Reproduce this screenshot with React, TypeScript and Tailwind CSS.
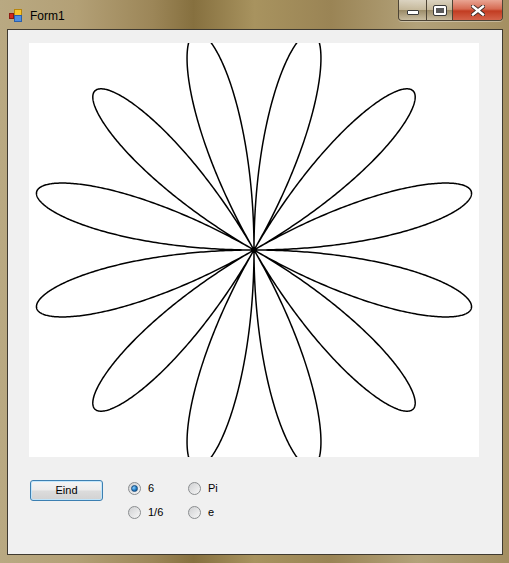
import { useMemo } from 'react';

const FONT = { fontFamily: '"Liberation Sans", Arial, sans-serif' };

// r = R * sin(6t), 12 petals centred on the canvas
function RoseCanvas() {
  const d = useMemo(() => {
    const cx = 225;
    const cy = 207;
    const R = 225;
    const pts: string[] = [];
    const steps = 3000;
    for (let i = 0; i <= steps; i++) {
      const t = (i / steps) * Math.PI * 2;
      const r = R * Math.sin(6 * t);
      const x = cx + r * Math.cos(t);
      const y = cy - r * Math.sin(t);
      pts.push(`${i === 0 ? 'M' : 'L'}${x.toFixed(2)} ${y.toFixed(2)}`);
    }
    return pts.join(' ');
  }, []);

  return (
    <div className="w-[450px] h-[414px] bg-white overflow-hidden">
      <svg width="450" height="414" viewBox="0 0 450 414">
        <path d={d} fill="none" stroke="#000" strokeWidth="1.5" />
      </svg>
    </div>
  );
}

function FormIcon() {
  return (
    <svg width="13" height="13" viewBox="0 0 13 13" className="flex-shrink-0">
      <rect x="0.5" y="4.5" width="4" height="5" fill="#d42a1c" stroke="#8c1a10" strokeWidth="1" />
      <rect x="5.5" y="0.5" width="7" height="6" fill="#f7c52e" stroke="#b8860b" strokeWidth="1" />
      <rect x="5.5" y="6.5" width="7" height="6" fill="#4f8ee0" stroke="#2c5fa8" strokeWidth="1" />
    </svg>
  );
}

function CaptionButtons() {
  return (
    <div className="flex h-[21px] rounded-b-[4px] border border-t-0 border-[#4d4435] overflow-hidden shadow-[0_1px_0_rgba(255,255,255,0.35)]">
      <div className="w-[28px] h-full flex items-center justify-center bg-[linear-gradient(to_bottom,rgba(255,255,255,0.55),rgba(255,255,255,0.25)_50%,rgba(90,80,60,0.25)_51%,rgba(255,255,255,0.3))] border-r border-[#4d4435]">
        <div className="w-[12px] h-[5px] mt-[5px] bg-white border border-[#3a3a3a] rounded-[1px]" />
      </div>
      <div className="w-[26px] h-full flex items-center justify-center bg-[linear-gradient(to_bottom,rgba(255,255,255,0.55),rgba(255,255,255,0.25)_50%,rgba(90,80,60,0.25)_51%,rgba(255,255,255,0.3))] border-r border-[#4d4435]">
        <div className="w-[12px] h-[9px] border-[2.5px] border-white outline outline-1 outline-[#3a3a3a] rounded-[1px] bg-[#5a5a5a]" />
      </div>
      <div className="w-[49px] h-full flex items-center justify-center bg-[linear-gradient(to_bottom,#e9a593,#d66a52_45%,#c23c22_55%,#d4634a)]">
        <svg width="14" height="11" viewBox="0 0 14 11">
          <path d="M2 1.5 L12 9.5 M12 1.5 L2 9.5" stroke="#3a2a26" strokeWidth="4.2" strokeLinecap="square" />
          <path d="M2 1.5 L12 9.5 M12 1.5 L2 9.5" stroke="#fff" strokeWidth="2.4" strokeLinecap="square" />
        </svg>
      </div>
    </div>
  );
}

function Radio({ checked, label }: { checked?: boolean; label: string }) {
  return (
    <div className="flex items-center gap-[7px] h-[16px]">
      <div className="w-[13px] h-[13px] rounded-full border border-[#8a8d8f] bg-[linear-gradient(135deg,#cfd0d2,#f7f7f7)] flex items-center justify-center flex-shrink-0">
        {checked && (
          <div className="w-[7px] h-[7px] rounded-full bg-[radial-gradient(circle_at_35%_35%,#8fd0ff,#1e7bc4_55%,#0b3f74)] border border-[#1b4d7e]" />
        )}
      </div>
      <span className="text-[11px] text-black leading-none">{label}</span>
    </div>
  );
}

export default function App() {
  return (
    <div
      className="w-[509px] h-[563px] flex flex-col pl-[7px] pr-[6px] bg-[linear-gradient(to_right,#b9a982_0%,#b3a076_15%,#9c8658_30%,#86703f_38%,#a8935f_50%,#9a8455_65%,#b3a27a_82%,#a48f62_100%)]"
      style={FONT}
    >
      {/* Title bar */}
      <div className="h-[29px] flex items-start justify-between flex-shrink-0">
        <div className="flex items-center gap-[8px] pl-[2px] pt-[9px]">
          <FormIcon />
          <span className="text-[12px] text-black leading-none">Form1</span>
        </div>
        <CaptionButtons />
      </div>

      {/* Client area */}
      <div className="h-[526px] border border-[#3f3a30] bg-[#f0f0f0] flex flex-col flex-shrink-0">
        <div className="pl-[21px] pt-[13px]">
          <RoseCanvas />
        </div>

        <div className="flex items-start pl-[22px] pt-[23px]">
          <button className="w-[73px] h-[21px] rounded-[3px] border border-[#3c7fb1] bg-[linear-gradient(to_bottom,#f4f4f4,#ececec_48%,#dcdcdc_52%,#d2d2d2)] shadow-[inset_0_0_0_1px_rgba(190,230,253,0.9)] text-[11px] text-black leading-none">
            Eind
          </button>
          <div className="ml-[25px] grid grid-cols-[60px_60px] gap-y-[8px] pt-[0px]">
            <Radio checked label="6" />
            <Radio label="Pi" />
            <Radio label="1/6" />
            <Radio label="e" />
          </div>
        </div>
      </div>
    </div>
  );
}
